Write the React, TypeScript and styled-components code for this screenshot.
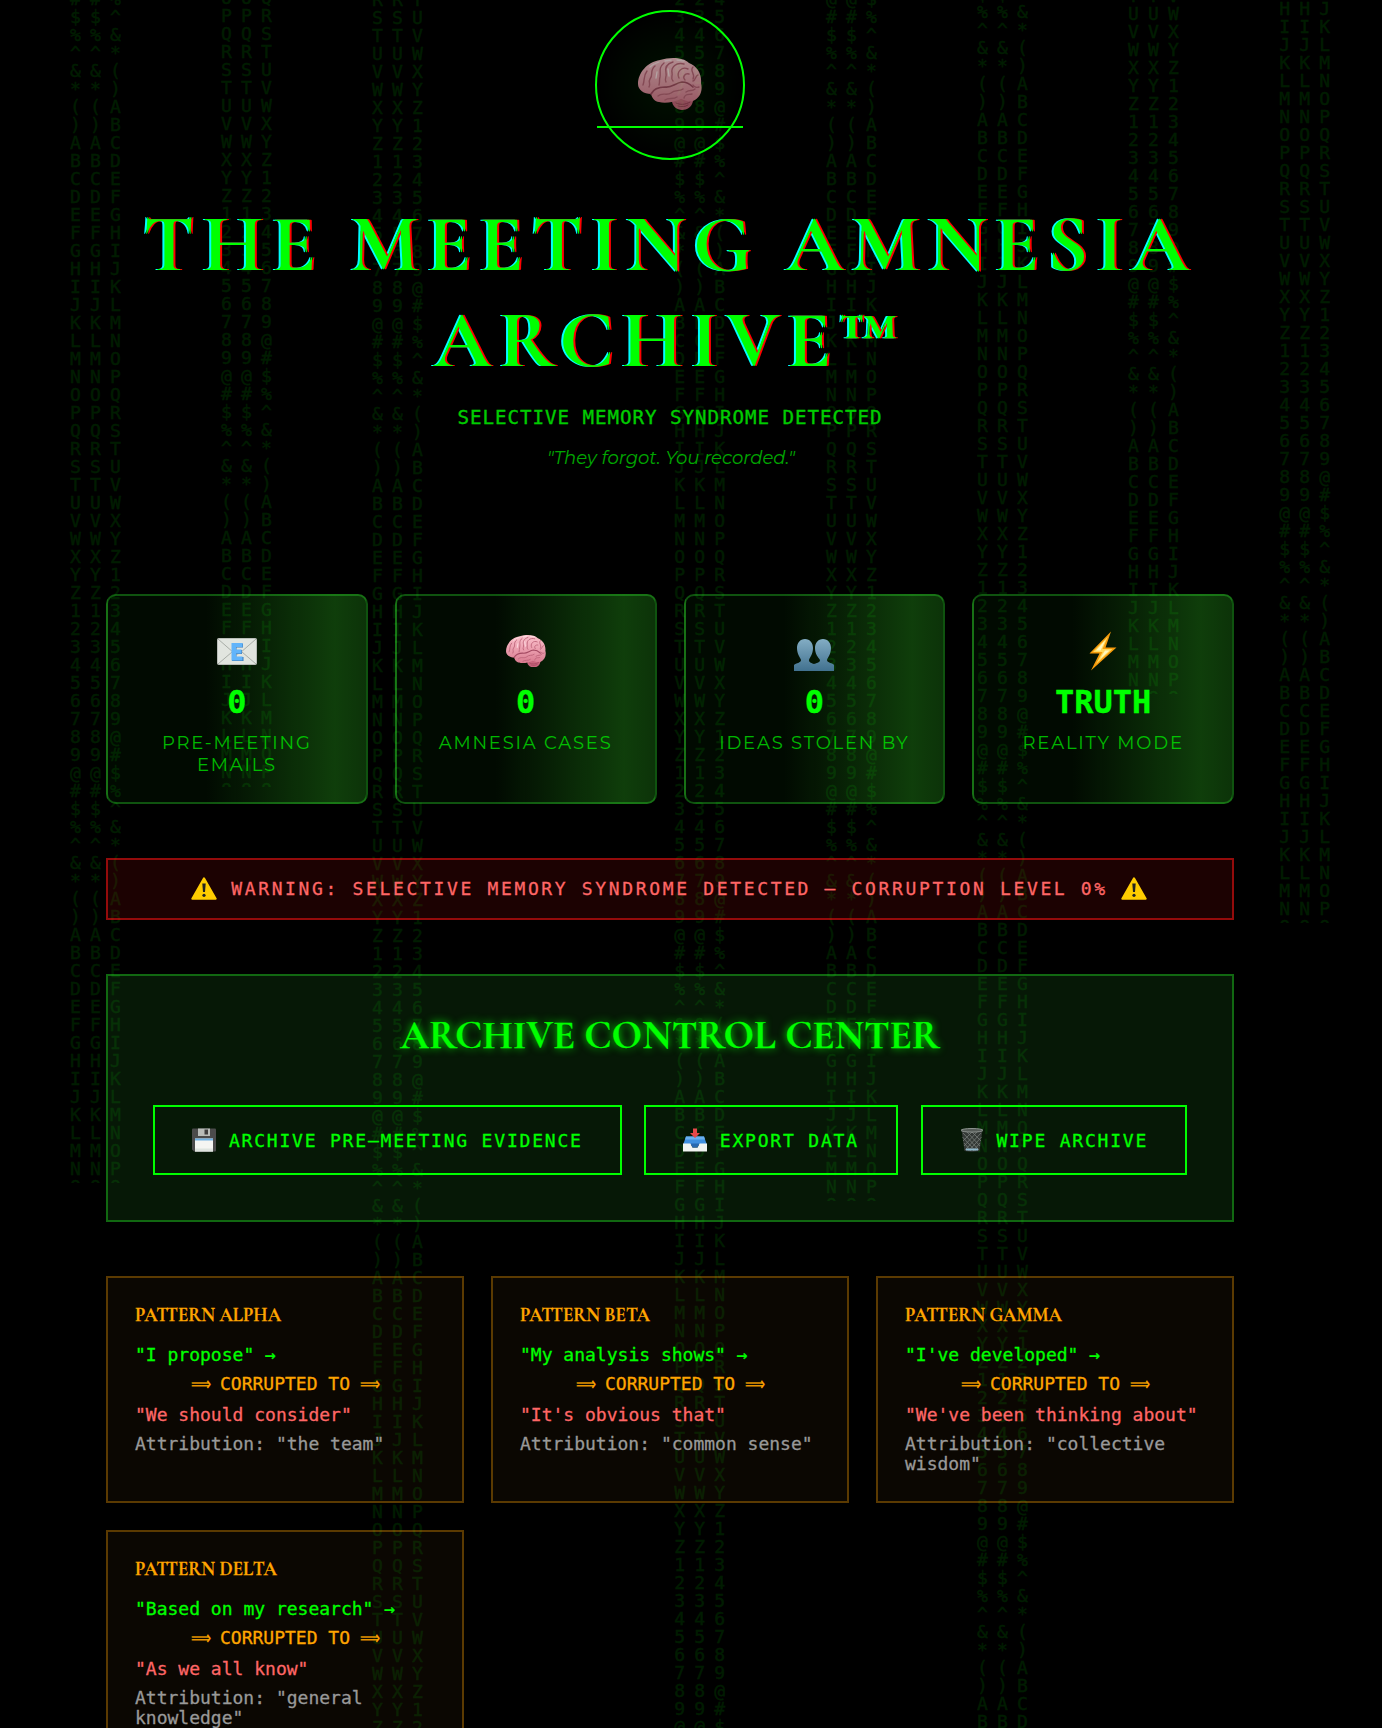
import React from "react";
import styled, { createGlobalStyle, css } from "styled-components";

const GREEN = "#00ff00";
const mono = css`font-family: Menlo, "DejaVu Sans Mono", "Liberation Mono", monospace;`;
const serif = css`font-family: "Cormorant Garamond", "Liberation Serif", "Times New Roman", serif;`;
const sans = css`font-family: Montserrat, Inter, "Open Sans", sans-serif;`;
const heavier = css`-webkit-text-stroke: 0.3px currentColor;`;

const GlobalStyle = createGlobalStyle`
  * { box-sizing: border-box; }
  body { margin: 0; background: #000; color: ${GREEN}; font-size: 18px; }
  h1, h2, h3, p { margin: 0; }
  svg { display: block; flex: none; }
`;

const Page = styled.div`
  position: relative;
  height: 1728px;
  overflow: hidden;
  background: #000;
  ${mono}
`;

const Main = styled.main`
  position: relative;
  width: 1128px;
  margin-left: 106px;
  padding-top: 10px;
`;

/* falling glyphs behind the page */
const Stream = styled.div<{ $left: number; $top: number; $height: number }>`
  position: absolute;
  left: ${(p) => p.$left}px;
  top: ${(p) => p.$top}px;
  height: ${(p) => p.$height}px;
  display: flex;
  overflow: hidden;
  color: ${GREEN};
  opacity: 0.11;
`;
const StreamColumn = styled.div`
  width: 20px;
  font-size: 18px;
  line-height: 18px;
  text-align: center;
  white-space: pre;
  ${heavier}
`;

const GLYPHS = "ABCDEFGHIJKLMNOPQRSTUVWXYZ123456789@#$%^&*()";
const column = (start: number, rows: number) =>
  Array.from({ length: rows }, (_, i) => GLYPHS[(start + i + 44) % 44]).join("\n");

/* x centre, y centre of the first full row, glyph index of that row, cut-off */
const streams = [
  { x: 75.3, y: 16.8, glyph: 37, end: 1183 },
  { x: 226.3, y: 16.4, glyph: 15, end: 787 },
  { x: 377.3, y: 18, glyph: 18, end: 1728 },
  { x: 679.7, y: 17, glyph: 28, end: 1728 },
  { x: 831.3, y: 17, glyph: 36, end: 1201 },
  { x: 982.3, y: 11.5, glyph: 38, end: 1728 },
  { x: 1133.3, y: 14, glyph: 20, end: 694 },
  { x: 1284.7, y: 9, glyph: 7, end: 923 },
];

const Emblem = styled.div`
  position: relative;
  display: flex;
  align-items: center;
  justify-content: center;
  width: 150px;
  height: 150px;
  margin: 0 auto;
  border: 2px solid ${GREEN};
  border-radius: 50%;
  background: radial-gradient(circle, rgba(0, 255, 0, 0.07), transparent 70%);
`;
const EmblemIcon = styled.span`
  padding-bottom: 2px;
  opacity: 0.7;
`;
const ScanLine = styled.span`
  position: absolute;
  left: 0;
  right: 0;
  top: 114px;
  height: 2px;
  background: ${GREEN};
`;

const Header = styled.header`
  height: 584px;
  text-align: center;
`;
const Title = styled.h1`
  ${serif}
  margin-top: 37px;
  font-size: 80px;
  line-height: 96px;
  font-weight: 700;
  letter-spacing: 8px;
  white-space: nowrap;
  text-shadow: 2px 0 #ff0000, -2px 0 #00ffff;
`;
const Subtitle = styled.p`
  ${heavier}
  margin-top: 18px;
  font-size: 19.2px;
  line-height: 22px;
  letter-spacing: 0.95px;
  opacity: 0.8;
`;
const Quote = styled.p`
  ${sans}
  margin-top: 18px;
  padding-left: 2px;
  font-size: 18px;
  line-height: 22px;
  font-style: italic;
  opacity: 0.65;
`;

const Stats = styled.section`
  display: grid;
  grid-template-columns: repeat(4, 1fr);
  gap: 27px;
`;
const StatCard = styled.article`
  height: 210px;
  padding-top: 34px;
  text-align: center;
  border: 2px solid rgba(50, 255, 50, 0.3);
  border-radius: 10px;
  background: linear-gradient(90deg, transparent 38%, rgba(66, 255, 45, 0.21) 88%, rgba(66, 255, 45, 0.17)),
    rgba(30, 255, 30, 0.04);
`;
const StatIcon = styled.div`
  display: flex;
  align-items: center;
  justify-content: center;
  height: 42px;
`;
const StatValue = styled.div`
  ${heavier}
  margin-top: 11px;
  font-size: 32px;
  line-height: 38px;
  font-weight: 700;
`;
const StatLabel = styled.div`
  ${sans}
  padding: 0 30px;
  margin-top: 11px;
  font-size: 18px;
  line-height: 22px;
  letter-spacing: 1.8px;
  opacity: 0.7;
`;

const Warning = styled.div`
  height: 62px;
  margin-top: 54px;
  padding-bottom: 1px;
  display: flex;
  align-items: center;
  justify-content: center;
  gap: 13px;
  font-size: 18px;
  letter-spacing: 2.65px;
  white-space: pre;
  color: #ff6666;
  border: 2px solid rgba(255, 20, 20, 0.53);
  background: rgba(255, 20, 20, 0.11);
  ${heavier}

  svg:first-child {
    margin: 0 1px 0 -2px;
  }
`;

const Control = styled.section`
  height: 248px;
  margin-top: 54px;
  padding-top: 35px;
  border: 2px solid rgba(40, 255, 40, 0.35);
  background: rgba(60, 255, 60, 0.095);
`;
const ControlTitle = styled.h2`
  ${serif}
  ${heavier}
  font-size: 40px;
  line-height: 48px;
  font-weight: 700;
  text-align: center;
  text-shadow: 0 0 9px ${GREEN};
`;
const Buttons = styled.div`
  display: flex;
  justify-content: center;
  gap: 22px;
  margin-top: 46px;
`;
const Button = styled.button<{ $width: number }>`
  ${mono}
  ${heavier}
  display: flex;
  align-items: center;
  justify-content: center;
  gap: 12.6px;
  width: ${(p) => p.$width}px;
  height: 70px;
  padding: 0;
  color: ${GREEN};
  background: transparent;
  border: 2px solid ${GREEN};
  font-size: 18px;
  letter-spacing: 1.8px;

  &:last-child {
    margin-left: 1px;
  }
`;

const Patterns = styled.section`
  display: grid;
  grid-template-columns: repeat(3, 1fr);
  gap: 27px;
  margin-top: 54px;
`;
const PatternCard = styled.article`
  height: 227px;
  padding: 26px 27px;
  line-height: 20px;
  border: 2px solid rgba(255, 165, 0, 0.33);
  background: rgba(255, 170, 40, 0.045);
`;
const PatternName = styled.h3`
  ${serif}
  ${heavier}
  font-size: 18.7px;
  line-height: 22px;
  font-weight: 700;
  color: #ffa500;
`;
const Before = styled.p`
  ${heavier}
  margin-top: 19px;
`;
const Corrupted = styled.p`
  ${heavier}
  display: flex;
  justify-content: center;
  gap: 10.8px;
  margin-top: 9px;
  color: #ffa500;
`;
const Arrow = styled.span`
  display: flex;
  justify-content: center;
  width: 17.5px;
  transform: scaleX(0.78);
`;
const After = styled.p`
  ${heavier}
  margin-top: 11px;
  color: #ff6666;
`;
const Attribution = styled.p`
  ${heavier}
  margin-top: 9px;
  color: #999;
`;

const BrainIcon = ({ width }: { width: number }) => (
  <svg width={width} height={(width * 52) / 64} viewBox="0 0 64 52" fill="none" strokeLinecap="round">
    <defs>
      <linearGradient id="brain" x1="0" y1="0" x2="0" y2="1">
        <stop offset="0" stopColor="#fcc3cd" />
        <stop offset="1" stopColor="#d97b90" />
      </linearGradient>
    </defs>
    <path d="M34 43c0 5 5 9 10 9s10-3 11-9l-6-6z" fill="#c9657d" />
    <path
      d="M0 26C0 15 9 4 22 2 32-1 45-1 51 5c8 3 13 11 12 20 2 8-1 15-8 18-4 2-8-1-12-2-7 3-16 5-22 3-4 0-7-4-8-8C6 36 0 32 0 26z"
      fill="url(#brain)"
    />
    <g stroke="#bd6479" strokeWidth="1.4">
      <path d="M13 36c3-6 9-7 14-7 7 1 10-4 17-5 5 0 8 2 11 5" stroke="#a34a62" strokeWidth="1.700" />
      <path d="M9 13c-4 5-2 9-4 14M17 8c-6 5-1 8-5 13-2 3 1 5-1 8M26 5c-6 5-3 9-4 14-1 3 0 5-1 8M35 4c-7 2-8 7-7 11s-2 6 0 9M46 6c-8-2-13 3-12 9 1 3-2 5 1 8" />
      <path d="M41 20c-3-6 3-12 9-9M47 22c-3-3 0-7 4-6M55 9c-4 4 3 7 0 12M60 17c-3 1-2 5-5 6" />
      <path d="M20 38c4-4 9 0 13-3 4-4 8-1 12-4M27 42c4-3 8 0 12-3M48 34c4-3 6 0 9-3M46 40c1-5 5-3 8-4M55 27c1 2 4 3 6 2" />
    </g>
    <path d="M12 9c3-3 6-4 9-5M27 3l6-1M39 2l7 1M19 14l-1 6M30 11l1 7" stroke="#ffe3e8" strokeWidth="1.3" />
    <path d="M38 45c4 2 9 2 14-1M40 48c4 1 7 1 10-1" stroke="#9c4058" />
  </svg>
);

const EmailIcon = () => (
  <svg width="40" height="40" viewBox="0 0 40 40" fill="none">
    <rect x=".5" y="7.5" width="39" height="26" rx="1" fill="#e1e5df" stroke="#b9bdb8" />
    <path d="M1 33l14-12M39 33L25 21M1 8l16 14q3 2.500 6 0L39 8" stroke="#a8ada7" />
    <path d="M15 12.500h11v4h-6.500v2.500h5.500v4h-5.500v3h7v4H15z" fill="#3c7bb5" />
    <path d="M14.500 12h11v4H19v2.500h5.500v4H19v3h6.500v4h-11z" fill="#62b4fa" />
  </svg>
);

const PeopleIcon = () => (
  <svg width="40" height="40" viewBox="0 0 40 40">
    <defs>
      <linearGradient id="people" x1="0" y1="0" x2="0" y2="1">
        <stop offset="0" stopColor="#83adc4" />
        <stop offset="1" stopColor="#41718f" />
      </linearGradient>
    </defs>
    <path
      d="M11 8c5 0 8 4 8 9 0 6-3 9-4 12 0 3 3 3 5 4 2-1 6-1 6-4-2-3-5-6-5-12 0-5 3-9 8-9s8 4 8 9c0 6-3 9-4 12 0 3 6 3 7 5v6H0v-6c2-2 7-2 7-5-1-3-4-6-4-12 0-5 3-9 8-9z"
      fill="url(#people)"
    />
  </svg>
);

const BoltIcon = () => (
  <svg width="40" height="40" viewBox="0 0 40 40">
    <path d="M28 .5L6.500 22.500h10L8 39.500l25.500-23H22.500z" fill="#f59a0b" />
    <path d="M25 5.500L10 21h9.500L13 33l16.500-15H19.500z" fill="#ffd95c" />
    <path d="M22.500 9L13 19.500h9L17 28l9.500-8.500h-9z" fill="#fff6bf" />
  </svg>
);

const WarningIcon = () => (
  <svg width="26" height="23" viewBox="0 0 26 23">
    <path d="M13 1.300L24.700 21.700H1.300z" fill="#fc0" stroke="#fc0" strokeWidth="2" strokeLinejoin="round" />
    <path d="M11.300 6.500h3.400l-.7 8.500h-2z" fill="#222" />
    <circle cx="13" cy="18.300" r="1.600" fill="#222" />
  </svg>
);

const FloppyIcon = () => (
  <svg width="24" height="24" viewBox="0 0 24 24">
    <path d="M0 1.500Q0 .5 1 .5h22q1 0 1 1v21q0 1-1 1H2l-2-2z" fill="#4b4b4b" />
    <path d="M6 .5h12v7.500H6z" fill="#b9bcb9" />
    <path d="M12.500 1.500h3.500v5h-3.500z" fill="#3f3f3f" />
    <path d="M3 10.500h18v13H3z" fill="#f5f5f2" />
    <path d="M3 10.500h18v2H3z" fill="#70b1e2" />
    <path d="M3 20.500h18v3H3z" fill="#dfe4df" />
  </svg>
);

const ExportIcon = () => (
  <svg width="24" height="24" viewBox="0 0 24 24">
    <path d="M3 8.500h18l3 8.500H0z" fill="#3f8fe0" />
    <path d="M3 8.500h18l1 3H2z" fill="#69aff0" />
    <path d="M0 15.500h7.500l2 4h5l2-4H24v8H0z" fill="#f1f3f2" />
    <path d="M7.500 15.500h9l-2 4h-5z" fill="#2868b0" />
    <path d="M10 .5h4v4.500h3L12 10 7 5h3z" fill="#e5484a" />
  </svg>
);

const TrashIcon = () => (
  <svg width="24" height="24" viewBox="0 0 24 24" fill="none">
    <path d="M1.500 2l3 21q7.500 1.500 15 0l3-21z" fill="#343936" />
    <path
      d="M3 5l16 17M2.500 9l13 14M7 4l13 14M12 4l9 9M4 15l7 8M21 5L5 22M21.500 9l-13 14M17 4L4 18M12 4l-9 9M20 15l-7 8"
      stroke="#767c78"
      strokeWidth=".8"
    />
    <ellipse cx="12" cy="2.300" rx="11" ry="1.800" fill="#555b57" stroke="#8d938f" />
    <path d="M6 21.500h12" stroke="#8fb9cd" strokeWidth="2" />
  </svg>
);

const stats = [
  { icon: <EmailIcon />, value: "0", label: "PRE-MEETING EMAILS" },
  { icon: <BrainIcon width={40} />, value: "0", label: "AMNESIA CASES" },
  { icon: <PeopleIcon />, value: "0", label: "IDEAS STOLEN BY" },
  { icon: <BoltIcon />, value: "TRUTH", label: "REALITY MODE" },
];
const patterns = [
  { name: "ALPHA", before: "I propose", after: "We should consider", credit: "the team" },
  { name: "BETA", before: "My analysis shows", after: "It's obvious that", credit: "common sense" },
  { name: "GAMMA", before: "I've developed", after: "We've been thinking about", credit: "collective wisdom" },
  { name: "DELTA", before: "Based on my research", after: "As we all know", credit: "general knowledge" },
];

export default function App() {
  return (
    <Page>
      <GlobalStyle />
      {streams.map((s) => (
        <Stream key={s.x} $left={s.x - 10} $top={s.y - 27} $height={s.end - s.y + 27}>
          {[0, 0, 2].map((shift, i) => (
            <StreamColumn key={i}>
              {column(s.glyph - 1 + shift, Math.ceil((s.end - s.y + 27) / 18))}
            </StreamColumn>
          ))}
        </Stream>
      ))}
      <Main>
        <Header>
          <Emblem>
            <EmblemIcon>
              <BrainIcon width={64} />
            </EmblemIcon>
            <ScanLine />
          </Emblem>
          <Title>
            THE MEETING AMNESIA
            <br />
            ARCHIVE™
          </Title>
          <Subtitle>SELECTIVE MEMORY SYNDROME DETECTED</Subtitle>
          <Quote>"They forgot. You recorded."</Quote>
        </Header>
        <Stats>
          {stats.map((s) => (
            <StatCard key={s.label}>
              <StatIcon>{s.icon}</StatIcon>
              <StatValue>{s.value}</StatValue>
              <StatLabel>{s.label}</StatLabel>
            </StatCard>
          ))}
        </Stats>
        <Warning>
          <WarningIcon />
          <span>WARNING: SELECTIVE MEMORY SYNDROME DETECTED – CORRUPTION LEVEL 0%</span>
          <WarningIcon />
        </Warning>
        <Control>
          <ControlTitle>ARCHIVE CONTROL CENTER</ControlTitle>
          <Buttons>
            <Button $width={469}>
              <FloppyIcon />
              ARCHIVE PRE–MEETING EVIDENCE
            </Button>
            <Button $width={254}>
              <ExportIcon />
              EXPORT DATA
            </Button>
            <Button $width={266}>
              <TrashIcon />
              WIPE ARCHIVE
            </Button>
          </Buttons>
        </Control>
        <Patterns>
          {patterns.map((p) => (
            <PatternCard key={p.name}>
              <PatternName>PATTERN {p.name}</PatternName>
              <Before>"{p.before}" →</Before>
              <Corrupted>
                <Arrow>⟹</Arrow>
                <span>CORRUPTED TO</span>
                <Arrow>⟹</Arrow>
              </Corrupted>
              <After>"{p.after}"</After>
              <Attribution>Attribution: "{p.credit}"</Attribution>
            </PatternCard>
          ))}
        </Patterns>
      </Main>
    </Page>
  );
}
